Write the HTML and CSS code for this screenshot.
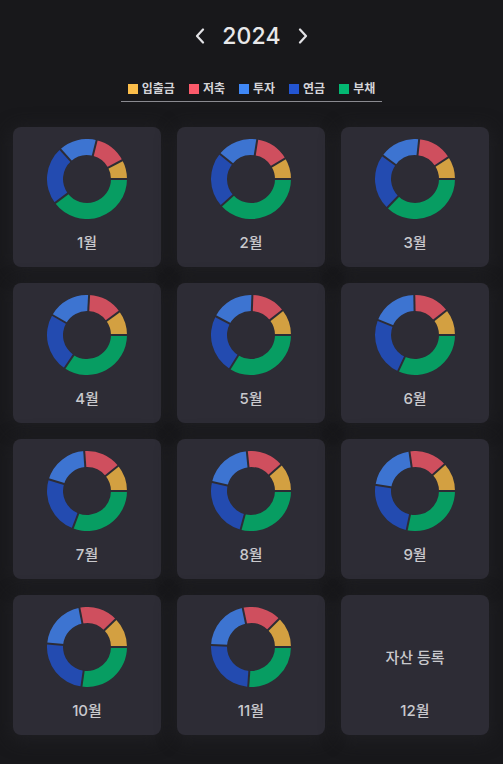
FILE: index.html
```html
<!DOCTYPE html>
<html lang="ko">
<head>
<meta charset="utf-8">
<title>2024 자산</title>
<link rel="stylesheet" href="styles.css">
</head>
<body>
<div class="page">
  <header class="year-nav">
    <button class="nav-btn" aria-label="이전 연도">
      <svg width="10" height="16" viewBox="0 0 10 16"><polyline points="8,1.5 2,8 8,14.5" fill="none" stroke="currentColor" stroke-width="2.2" stroke-linecap="round" stroke-linejoin="round"/></svg>
    </button>
    <h1 class="year">2024</h1>
    <button class="nav-btn" aria-label="다음 연도">
      <svg width="10" height="16" viewBox="0 0 10 16"><polyline points="2,1.5 8,8 2,14.5" fill="none" stroke="currentColor" stroke-width="2.2" stroke-linecap="round" stroke-linejoin="round"/></svg>
    </button>
  </header>

  <div class="legend">
    <span class="legend-item"><i class="sw sw-gold"></i>입출금</span>
    <span class="legend-item"><i class="sw sw-red"></i>저축</span>
    <span class="legend-item"><i class="sw sw-blue"></i>투자</span>
    <span class="legend-item"><i class="sw sw-navy"></i>연금</span>
    <span class="legend-item"><i class="sw sw-green"></i>부채</span>
  </div>

  <div class="grid">
    <div class="card"><div class="donut" data-bounds="28,76,132,217"></div><div class="month">1월</div></div>
    <div class="card"><div class="donut" data-bounds="31,81,141,222"></div><div class="month">2월</div></div>
    <div class="card"><div class="donut" data-bounds="33,84,144,226"></div><div class="month">3월</div></div>
    <div class="card"><div class="donut" data-bounds="36,87,150,236"></div><div class="month">4월</div></div>
    <div class="card"><div class="donut" data-bounds="38,88,152,238"></div><div class="month">5월</div></div>
    <div class="card"><div class="donut" data-bounds="38,91,158,245"></div><div class="month">6월</div></div>
    <div class="card"><div class="donut" data-bounds="39,94,163,249"></div><div class="month">7월</div></div>
    <div class="card"><div class="donut" data-bounds="41,96,167,255"></div><div class="month">8월</div></div>
    <div class="card"><div class="donut" data-bounds="42,98,171,258"></div><div class="month">9월</div></div>
    <div class="card"><div class="donut" data-bounds="44,101,175,262"></div><div class="month">10월</div></div>
    <div class="card"><div class="donut" data-bounds="45,102,177,266"></div><div class="month">11월</div></div>
    <div class="card card-empty"><div class="register">자산 등록</div><div class="month">12월</div></div>
  </div>
</div>
<script src="script.js"></script>
</body>
</html>
```

FILE: styles.css
```css
* { box-sizing: border-box; }

body {
  margin: 0;
  background: #18181b;
  font-family: "Inter", "Noto Sans CJK KR", sans-serif;
  color: #c9c9cd;
}

.page {
  width: 503px;
  padding: 0 13px 30px 13px;
}

.year-nav {
  height: 72px;
  display: flex;
  align-items: center;
  justify-content: center;
  gap: 17px;
}

.nav-btn {
  background: none;
  border: 0;
  padding: 0;
  color: #e2e2e6;
  display: flex;
  align-items: center;
  cursor: pointer;
}

.year {
  margin: 0;
  font-size: 23px;
  font-weight: 500;
  color: #e8e8ea;
  letter-spacing: 0.2px;
}

.legend {
  width: fit-content;
  margin: 8px auto 0;
  padding: 0 7px 3px;
  display: flex;
  gap: 14px;
  height: 22px;
  align-items: center;
  border-bottom: 1px solid #8a8a90;
}

.legend-item {
  display: flex;
  align-items: center;
  gap: 4px;
  font-size: 12px;
  font-weight: 700;
  color: #d4d4d8;
  line-height: 18px;
}

.sw {
  display: inline-block;
  width: 10px;
  height: 10px;
}
.sw-gold { background: #fbbd4a; }
.sw-red { background: #fc5a6b; }
.sw-blue { background: #3f87f6; }
.sw-navy { background: #2355d2; }
.sw-green { background: #03b872; }

.grid {
  margin-top: 25px;
  display: grid;
  grid-template-columns: repeat(3, 148px);
  grid-auto-rows: 140px;
  gap: 16px;
}

.card {
  background: #2d2c35;
  border-radius: 8px;
  box-shadow: 0 3px 18px 2px #202024;
  display: flex;
  flex-direction: column;
  align-items: center;
  padding: 12px 0 14px;
}

.donut {
  width: 80px;
  height: 80px;
}
.donut svg { display: block; }

.month {
  margin-top: 14px;
  font-size: 15px;
  line-height: 20px;
  font-weight: 500;
  color: #c9c9cd;
}

.card-empty .register {
  flex: 1;
  display: flex;
  align-items: center;
  font-size: 15px;
  font-weight: 500;
  color: #c9c9cd;
  padding-top: 4px;
}
.card-empty .month { margin-top: 0; }
```

FILE: script.js
```javascript
(function () {
  var colors = ['#d3a041', '#cf4f5e', '#3d74d1', '#234bb0', '#079d62'];
  var cardBg = '#2d2c35';
  var cx = 40, cy = 40, R = 40, r = 24;

  function xy(a, rad) {
    var t = a * Math.PI / 180;
    return [(cx + rad * Math.cos(t)).toFixed(2), (cy - rad * Math.sin(t)).toFixed(2)];
  }
  function pt(a, rad) { return xy(a, rad).join(' '); }

  document.querySelectorAll('.donut').forEach(function (el) {
    var b = el.getAttribute('data-bounds').split(',').map(Number);
    var angles = [0].concat(b, [360]);
    var s = '<svg viewBox="0 0 80 80" width="80" height="80">';
    for (var i = 0; i < 5; i++) {
      var a0 = angles[i], a1 = angles[i + 1];
      var large = (a1 - a0) > 180 ? 1 : 0;
      var d = 'M ' + pt(a0, R) + ' A ' + R + ' ' + R + ' 0 ' + large + ' 0 ' + pt(a1, R) +
              ' L ' + pt(a1, r) + ' A ' + r + ' ' + r + ' 0 ' + large + ' 1 ' + pt(a0, r) + ' Z';
      s += '<path d="' + d + '" fill="' + colors[i] + '"/>';
    }
    for (var j = 0; j < 5; j++) {
      var p1 = xy(angles[j], r - 1), p2 = xy(angles[j], R + 1);
      s += '<line x1="' + p1[0] + '" y1="' + p1[1] + '" x2="' + p2[0] + '" y2="' + p2[1] +
           '" stroke="' + cardBg + '" stroke-width="2"/>';
    }
    s += '</svg>';
    el.innerHTML = s;
  });
})();
```
